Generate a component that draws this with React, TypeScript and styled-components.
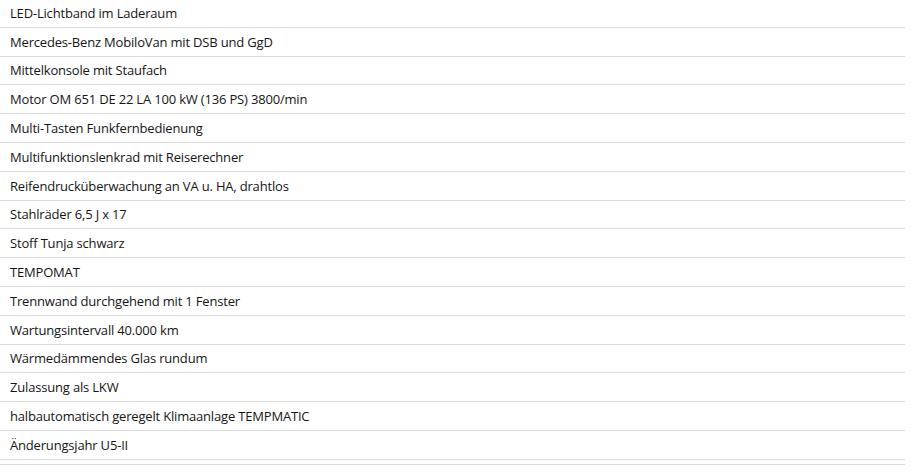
import React from "react";
import styled, { createGlobalStyle } from "styled-components";

const GlobalStyle = createGlobalStyle`
  html, body {
    margin: 0;
    padding: 0;
    background: #fff;
  }
  body {
    font-family: "Open Sans", "Liberation Sans", sans-serif;
  }
`;

const features = [
  "LED-Lichtband im Laderaum",
  "Mercedes-Benz MobiloVan mit DSB und GgD",
  "Mittelkonsole mit Staufach",
  "Motor OM 651 DE 22 LA 100 kW (136 PS) 3800/min",
  "Multi-Tasten Funkfernbedienung",
  "Multifunktionslenkrad mit Reiserechner",
  "Reifendrucküberwachung an VA u. HA, drahtlos",
  "Stahlräder 6,5 J x 17",
  "Stoff Tunja schwarz",
  "TEMPOMAT",
  "Trennwand durchgehend mit 1 Fenster",
  "Wartungsintervall 40.000 km",
  "Wärmedämmendes Glas rundum",
  "Zulassung als LKW",
  "halbautomatisch geregelt Klimaanlage TEMPMATIC",
  "Änderungsjahr U5-II",
];

const FeatureList = styled.ul`
  list-style: none;
  margin: -1px 0 0 0;
  padding: 0 0 4px 0;
  width: 905px;
  border-bottom: 1px solid #dcdcdc;
`;

const FeatureRow = styled.li`
  height: 28.8px;
  box-sizing: border-box;
  display: flex;
  align-items: center;
  padding: 0 10px;
  border-bottom: 1px solid #dcdcdc;
  font-size: 13px;
  letter-spacing: -0.18px;
  color: #151515;
`;

export default function App() {
  return (
    <>
      <GlobalStyle />
      <FeatureList>
        {features.map((f) => (
          <FeatureRow key={f}>{f}</FeatureRow>
        ))}
      </FeatureList>
    </>
  );
}
